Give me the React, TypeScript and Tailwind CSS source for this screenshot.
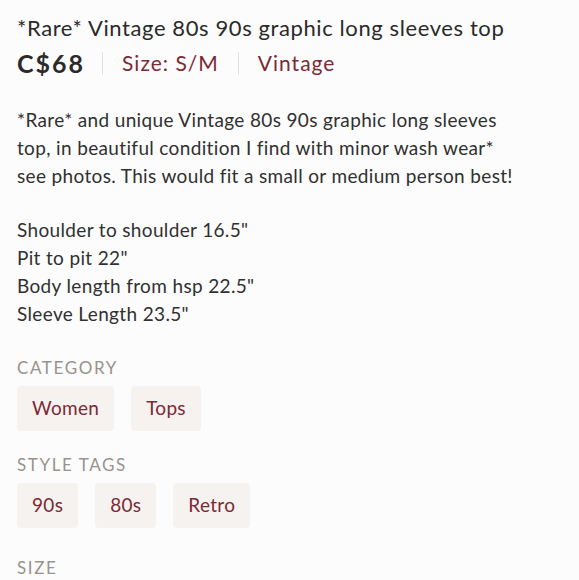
const category = ['Women', 'Tops'];
const styleTags = ['90s', '80s', 'Retro'];

function Chip({ label }: { label: string }) {
  return (
    <span className="flex h-[45px] items-center rounded-[4px] bg-[#f6f2ef] px-[15px] text-[19px] tracking-[0.3px] text-[#7b2a36]">
      {label}
    </span>
  );
}

function Section({ title, items }: { title: string; items?: string[] }) {
  return (
    <div className="flex flex-col">
      <h4 className="text-[17px] leading-[20px] tracking-[1.6px] text-[#98938c] uppercase">
        {title}
      </h4>
      {items && (
        <div className="mt-[8px] flex gap-[17px]">
          {items.map((item) => (
            <Chip key={item} label={item} />
          ))}
        </div>
      )}
    </div>
  );
}

export default function App() {
  return (
    <div className="min-h-[580px] w-[579px] bg-[#fcfcfc] px-[17px] pt-[13px] font-['Lato',sans-serif] text-[#2a2a2a]">
      <h1 className="text-[22px] leading-[30px] tracking-[0.6px] whitespace-nowrap">
        *Rare* Vintage 80s 90s graphic long sleeves top
      </h1>
      <div className="mt-[5px] flex items-center leading-[30px]">
        <span className="text-[25px] font-bold tracking-[2px]">C$68</span>
        <span className="mr-[19px] ml-[17px] h-[23px] w-px bg-[#e4dfda]" />
        <span className="text-[21px] tracking-[1px] text-[#7b2a36]">Size: S/M</span>
        <span className="mx-[19px] h-[23px] w-px bg-[#e4dfda]" />
        <span className="text-[21px] tracking-[1px] text-[#7b2a36]">Vintage</span>
      </div>
      <p className="mt-[28px] w-[510px] text-[19px] leading-[28px] tracking-[0.35px] text-[#303030]">
        *Rare* and unique Vintage 80s 90s graphic long sleeves top, in beautiful
        condition I find with minor wash wear* see photos. This would fit a small
        or medium person best!
      </p>
      <p className="mt-[26px] text-[19px] leading-[28px] tracking-[0.35px] text-[#303030]">
        Shoulder to shoulder 16.5"
        <br />
        Pit to pit 22"
        <br />
        Body length from hsp 22.5"
        <br />
        Sleeve Length 23.5"
      </p>
      <div className="mt-[30px] flex flex-col gap-[24px]">
        <Section title="Category" items={category} />
        <Section title="Style Tags" items={styleTags} />
        <div className="mt-[6px]">
          <Section title="Size" />
        </div>
      </div>
    </div>
  );
}
